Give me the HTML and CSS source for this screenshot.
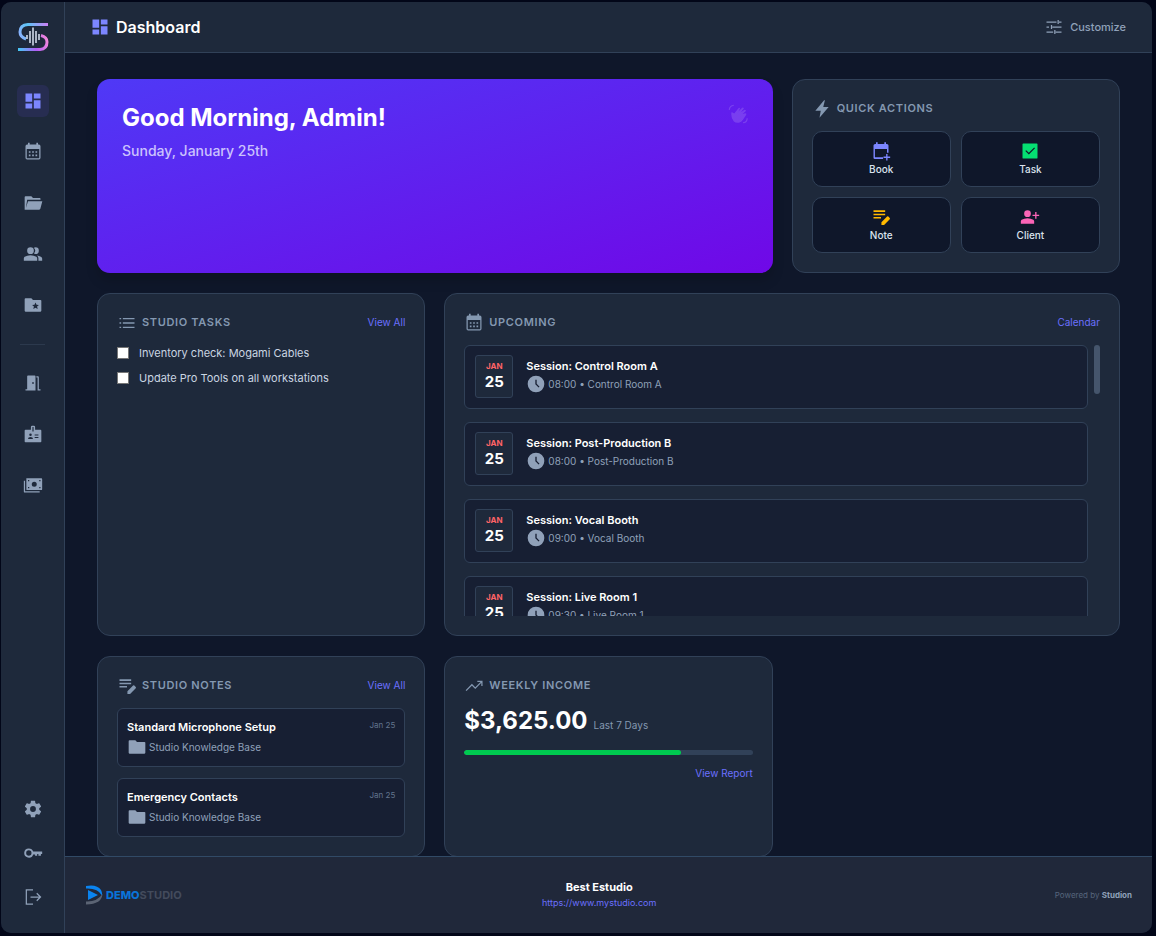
FILE: index.html
```
<!DOCTYPE html>
<html lang="en">

<head>
    <meta charset="UTF-8">
    <meta name="viewport" content="width=device-width, initial-scale=1.0">
    <title>Dashboard</title>
    <link rel="stylesheet" href="styles.css">
</head>

<body>
    <!-- Shared icons -->
    <svg class="sprite" aria-hidden="true">
        <symbol id="i-dashboard" viewBox="0 0 24 24"><path d="M13 3v6h8V3M13 21h8V11h-8M3 21h8v-6H3M3 13h8V3H3z"/></symbol>
        <symbol id="i-calendar" viewBox="0 0 24 24"><path fill-rule="evenodd" d="M6 1h2v2h8V1h2v2h1a2 2 0 0 1 2 2v14a2 2 0 0 1-2 2H5a2 2 0 0 1-2-2V5a2 2 0 0 1 2-2h1zM4.500 8.500v11h15v-11zM7 11h2v2H7zM11 11h2v2h-2zM15 11h2v2h-2zM7 15h2v2H7zM11 15h2v2h-2zM15 15h2v2h-2z"/></symbol>
        <symbol id="i-folder-open" viewBox="0 0 24 24"><path d="M2 20V5q0-1 1-1h7l2 2h8q1 0 1 1v1H5L3.500 18 6 10h17.200l-2.400 9q-.3 1-1.300 1z"/></symbol>
        <symbol id="i-people" viewBox="0 0 24 24"><path d="M1 20v-2.800q0-1.200 1-1.800Q5 13.500 9 13.500t7 1.900q1 .6 1 1.800V20zM18.500 20v-3q0-1.800-1.700-3.100 2.600.4 4.600 1.500 1.600.9 1.600 2.100V20z"/><circle cx="9" cy="8" r="4"/><path d="M13 11.500a5 5 0 0 0 0-7Q14 4 15 4a4 4 0 0 1 0 8q-1 0-2-.5z"/></symbol>
        <symbol id="i-folder-star" viewBox="0 0 24 24"><path fill-rule="evenodd" d="M2 5q0-1 1-1h7l2 2h9q1 0 1 1v12q0 1-1 1H3q-1 0-1-1zM17.600 16.700l-.7-2.900 2.200-1.900-2.900-.3L15 9l-1.200 2.600-2.900.3 2.200 1.900-.7 2.900 2.600-1.500z"/></symbol>
        <symbol id="i-door" viewBox="0 0 24 24"><path fill-rule="evenodd" d="M3 21v-1.500h2V4q0-1 1-1h8q1 0 1 1v17zM11 11v2h2v-2z"/><path d="M16 4h2q1 0 1 1v14.500h2V21h-3.500V5.500H16z"/></symbol>
        <symbol id="i-badge" viewBox="0 0 24 24"><path fill-rule="evenodd" d="M9.500 7V3.500Q9.500 2 11 2h2q1.500 0 1.500 1.500V7H21q1 0 1 1v13q0 1-1 1H3q-1 0-1-1V8q0-1 1-1zM11.300 3.500V9h1.400V3.500zM6 18h6q0-2.500-3-2.500T6 18zM9 11.500a1.500 1.500 0 1 0 0 3 1.500 1.500 0 0 0 0-3zM14 12.500v1.300h4.500v-1.300zM14 15.500v1.300h4.500v-1.300z"/></symbol>
        <symbol id="i-cash" viewBox="0 0 24 24"><path fill-rule="evenodd" d="M4 4h18q1 0 1 1v12q0 1-1 1H5q-1 0-1-1zM13.500 8a3 3 0 1 0 0 6 3 3 0 0 0 0-6zM6 6v1.500h1.500V6zM19.500 6v1.500H21V6zM6 14.500V16h1.500v-1.500zM19.500 14.500V16H21v-1.500z"/><path d="M1 7h1.500v12.500H20V21H2q-1 0-1-1z"/></symbol>
        <symbol id="i-cog" viewBox="0 0 24 24"><path d="M12 15.500A3.500 3.500 0 0 1 8.500 12 3.500 3.500 0 0 1 12 8.500a3.500 3.500 0 0 1 3.500 3.500 3.500 3.500 0 0 1-3.500 3.500m7.430-2.530c.04-.32.07-.64.07-.97s-.03-.66-.07-1l2.110-1.630c.19-.15.24-.42.12-.64l-2-3.460c-.12-.22-.39-.31-.61-.22l-2.490 1c-.52-.39-1.060-.73-1.690-.98l-.37-2.650A.5.500 0 0 0 14 2h-4c-.25 0-.46.18-.5.420l-.37 2.650c-.63.25-1.170.59-1.690.98l-2.490-1c-.22-.09-.49 0-.61.220l-2 3.460c-.13.220-.07.490.12.640L4.570 11c-.04.340-.07.670-.07 1s.03.650.07.970l-2.110 1.660c-.19.150-.25.420-.12.640l2 3.460c.12.220.39.300.61.220l2.490-1.010c.52.400 1.060.740 1.690.990l.37 2.650c.04.240.25.420.5.420h4c.25 0 .46-.18.500-.42l.37-2.650c.63-.26 1.170-.59 1.690-.99l2.490 1.010c.22.080.49 0 .61-.22l2-3.460c.12-.22.07-.49-.12-.64z"/></symbol>
        <symbol id="i-key" viewBox="0 0 24 24"><path fill-rule="evenodd" d="M7 6.500a5.500 5.500 0 0 1 5.200 3.800H23v3h-1.500v2h-3v-2H17v2h-2.500v-1.600h-2.300A5.500 5.500 0 1 1 7 6.500zm0 2.300a3.200 3.200 0 1 0 0 6.400 3.200 3.200 0 0 0 0-6.400z"/></symbol>
        <symbol id="i-logout" viewBox="0 0 24 24"><path class="line" d="M12 3.500H4v17h8M9 12h11.500M16.500 7.500L21 12l-4.500 4.500"/></symbol>
        <symbol id="i-tune" viewBox="0 0 24 24"><path class="line" d="M3 6h12M18 6h3M17 3.500v5M3 12h3M10 12h11M9 9.500v5M3 18h8M14 18h7M13 15.500v5"/></symbol>
        <symbol id="i-bolt" viewBox="0 0 24 24"><path d="M14.500 1.500L4 14h6.500L9 22.500 20 9.500h-6.500l2-8z"/></symbol>
        <symbol id="i-calendar-plus" viewBox="0 0 24 24"><path fill-rule="evenodd" d="M6 1.500h2v2h8v-2h2v2h1q2 0 2 2V14h-1.800V9.500H4.700v10h9.800V21.500H4.500q-1.500 0-1.500-1.500V5.500q0-2 2-2h1z"/><path d="M18.200 15.500h1.600v3.200H23v1.600h-3.200v3.200h-1.600v-3.200H15v-1.600h3.200z"/></symbol>
        <symbol id="i-task" viewBox="0 0 24 24"><path fill-rule="evenodd" d="M4 3h16q1 0 1 1v16q0 1-1 1H4q-1 0-1-1V4q0-1 1-1zM10.600 16.200L18 8.800l-1-1-6.400 6.400-3.200-3.200-1 1z"/></symbol>
        <symbol id="i-note" viewBox="0 0 24 24"><path d="M3 4h14v1.900H3zM3 8h14v1.900H3zM3 12h9v1.900H3zM12.500 21.500v-3.200l6.800-6.800q.8-.6 1.500 0l1.700 1.700q.6.700 0 1.500l-6.800 6.800z"/></symbol>
        <symbol id="i-client" viewBox="0 0 24 24"><circle cx="9" cy="8" r="4"/><path d="M1 20v-2.800q0-1.200 1-1.800Q5 13.500 9 13.500t7 1.900q1 .6 1 1.800V20zM18.200 6h1.600v3.200H23v1.600h-3.200V14h-1.600v-3.200H15V9.200h3.200z"/></symbol>
        <symbol id="i-list" viewBox="0 0 24 24"><path d="M3 6h2v1.600H3zM7 6h14v1.600H7zM3 11.200h2v1.600H3zM7 11.200h14v1.600H7zM3 16.400h2V18H3zM7 16.400h14V18H7z"/></symbol>
        <symbol id="i-clock" viewBox="0 0 24 24"><path fill-rule="evenodd" d="M12 2a10 10 0 1 0 0 20 10 10 0 0 0 0-20zM11.200 7h1.600v4.700l3.400 3.500-1.100 1.100-3.900-3.900z"/></symbol>
        <symbol id="i-folder" viewBox="0 0 24 24"><path d="M2 5q0-1 1-1h7l2 2h9q1 0 1 1v12q0 1-1 1H3q-1 0-1-1z"/></symbol>
        <symbol id="i-trend" viewBox="0 0 24 24"><path class="line" d="M2.500 17.500l7-7 4 4 8-8M16 6.500h5.500V12"/></symbol>
        <symbol id="i-wave" viewBox="0 0 24 24"><path d="M4.500 9.500l3 2L12.500 5q1.200-1 2 .3L12.500 9l4.500-4.500q1.500-.7 2 .8L15.500 10l4.500-3q1.500 0 1.500 1.500L17.500 12l3.500-1q1.300.3 1 1.700l-4 6.300a7.500 7.500 0 0 1-11 2Q3.500 17.500 4 11z"/><path class="line" d="M1.500 7Q2 2 7 1.500M23 17q0 5-5 5.500"/></symbol>
    </svg>

    <div class="app">
        <aside class="sidebar">
            <a class="brand" href="#" aria-label="Studion">
                <svg width="32" height="32" viewBox="0 0 32 32" fill="none">
                    <defs>
                        <linearGradient id="gTop" x1="2" y1="16" x2="31" y2="2" gradientUnits="userSpaceOnUse">
                            <stop offset="0" stop-color="#8fb0ff"/>
                            <stop offset=".4" stop-color="#5cc4f5"/>
                            <stop offset="1" stop-color="#cf7df5"/>
                        </linearGradient>
                        <linearGradient id="gBottom" x1="1" y1="28" x2="31" y2="18" gradientUnits="userSpaceOnUse">
                            <stop offset="0" stop-color="#45c8f5"/>
                            <stop offset=".55" stop-color="#b25cf5"/>
                            <stop offset="1" stop-color="#f58adb"/>
                        </linearGradient>
                    </defs>
                    <path d="M31 3.500H11Q3 4 3 11q0 5 6 7" stroke="url(#gTop)" stroke-width="3"/>
                    <path d="M1 28.500h22q7-.5 7-7.500 0-5-6-6.500" stroke="url(#gBottom)" stroke-width="3"/>
                    <path d="M10 14v4M13 10v12M16 6.500v18M19 10v12M22 13v6" stroke="#dbe4f5" stroke-width="1.500"/>
                </svg>
            </a>
            <nav class="nav">
                <a class="nav-link active" href="#" aria-label="Dashboard"><svg class="icon"><use href="#i-dashboard"/></svg></a>
                <a class="nav-link" href="#" aria-label="Calendar"><svg class="icon"><use href="#i-calendar"/></svg></a>
                <a class="nav-link" href="#" aria-label="Projects"><svg class="icon"><use href="#i-folder-open"/></svg></a>
                <a class="nav-link" href="#" aria-label="Clients"><svg class="icon"><use href="#i-people"/></svg></a>
                <a class="nav-link" href="#" aria-label="Library"><svg class="icon"><use href="#i-folder-star"/></svg></a>
                <hr>
                <a class="nav-link" href="#" aria-label="Rooms"><svg class="icon"><use href="#i-door"/></svg></a>
                <a class="nav-link" href="#" aria-label="Staff"><svg class="icon"><use href="#i-badge"/></svg></a>
                <a class="nav-link" href="#" aria-label="Payments"><svg class="icon"><use href="#i-cash"/></svg></a>
            </nav>
            <div class="nav-bottom">
                <a class="nav-link" href="#" aria-label="Settings"><svg class="icon"><use href="#i-cog"/></svg></a>
                <a class="nav-link" href="#" aria-label="Password"><svg class="icon"><use href="#i-key"/></svg></a>
                <a class="nav-link" href="#" aria-label="Log out"><svg class="icon"><use href="#i-logout"/></svg></a>
            </div>
        </aside>

        <div class="page">
            <header class="topbar">
                <h1><svg class="icon"><use href="#i-dashboard"/></svg>Dashboard</h1>
                <button class="customize" type="button"><svg class="icon"><use href="#i-tune"/></svg>Customize</button>
            </header>

            <main class="content">
                <section class="hero wide">
                    <div>
                        <h2>Good Morning, Admin!</h2>
                        <p>Sunday, January 25th</p>
                    </div>
                    <svg class="icon"><use href="#i-wave"/></svg>
                </section>

                <section class="card">
                    <div class="card-head">
                        <h3><svg class="icon"><use href="#i-bolt"/></svg>Quick Actions</h3>
                    </div>
                    <div class="actions">
                        <button type="button"><svg class="icon indigo"><use href="#i-calendar-plus"/></svg>Book</button>
                        <button type="button"><svg class="icon green"><use href="#i-task"/></svg>Task</button>
                        <button type="button"><svg class="icon amber"><use href="#i-note"/></svg>Note</button>
                        <button type="button"><svg class="icon pink"><use href="#i-client"/></svg>Client</button>
                    </div>
                </section>

                <section class="card">
                    <div class="card-head">
                        <h3><svg class="icon"><use href="#i-list"/></svg>Studio Tasks</h3>
                        <a href="#">View All</a>
                    </div>
                    <div class="tasks">
                        <label><input type="checkbox">Inventory check: Mogami Cables</label>
                        <label><input type="checkbox">Update Pro Tools on all workstations</label>
                    </div>
                </section>

                <section class="card wide">
                    <div class="card-head">
                        <h3><svg class="icon"><use href="#i-calendar"/></svg>Upcoming</h3>
                        <a href="#">Calendar</a>
                    </div>
                    <div class="scroller">
                        <div class="sessions">
                            <article class="session">
                                <div class="date"><span>Jan</span><b>25</b></div>
                                <div>
                                    <h4>Session: Control Room A</h4>
                                    <p class="meta"><svg class="icon"><use href="#i-clock"/></svg>08:00 • Control Room A</p>
                                </div>
                            </article>
                            <article class="session">
                                <div class="date"><span>Jan</span><b>25</b></div>
                                <div>
                                    <h4>Session: Post-Production B</h4>
                                    <p class="meta"><svg class="icon"><use href="#i-clock"/></svg>08:00 • Post-Production B</p>
                                </div>
                            </article>
                            <article class="session">
                                <div class="date"><span>Jan</span><b>25</b></div>
                                <div>
                                    <h4>Session: Vocal Booth</h4>
                                    <p class="meta"><svg class="icon"><use href="#i-clock"/></svg>09:00 • Vocal Booth</p>
                                </div>
                            </article>
                            <article class="session">
                                <div class="date"><span>Jan</span><b>25</b></div>
                                <div>
                                    <h4>Session: Live Room 1</h4>
                                    <p class="meta"><svg class="icon"><use href="#i-clock"/></svg>09:30 • Live Room 1</p>
                                </div>
                            </article>
                        </div>
                        <div class="scrollbar"></div>
                    </div>
                </section>

                <section class="card">
                    <div class="card-head">
                        <h3><svg class="icon"><use href="#i-note"/></svg>Studio Notes</h3>
                        <a href="#">View All</a>
                    </div>
                    <div class="notes">
                        <article class="note">
                            <div class="note-top">
                                <h4>Standard Microphone Setup</h4>
                                <time>Jan 25</time>
                            </div>
                            <p class="meta"><svg class="icon"><use href="#i-folder"/></svg>Studio Knowledge Base</p>
                        </article>
                        <article class="note">
                            <div class="note-top">
                                <h4>Emergency Contacts</h4>
                                <time>Jan 25</time>
                            </div>
                            <p class="meta"><svg class="icon"><use href="#i-folder"/></svg>Studio Knowledge Base</p>
                        </article>
                    </div>
                </section>

                <section class="card">
                    <div class="card-head">
                        <h3><svg class="icon"><use href="#i-trend"/></svg>Weekly Income</h3>
                    </div>
                    <p class="income"><b>$3,625.00</b> <span>Last 7 Days</span></p>
                    <div class="bar"><div class="bar-fill" style="width: 75%"></div></div>
                    <a class="report" href="#">View Report</a>
                </section>
            </main>

            <footer class="footer">
                <div class="logo">
                    <svg width="18" height="20" viewBox="0 0 18 20">
                        <path d="M1 1Q12-1 16 5q1.500 3 1 5.500Q13 3 1 3.500z" fill="#0a84f0"/>
                        <path d="M3 5l10 5-10 5z" fill="#0a84f0"/>
                        <path d="M17.500 9Q17 19 1 19.500v-3Q12 17 17.500 9z" fill="#5b6474"/>
                    </svg>
                    <span><b>DEMO</b>STUDIO</span>
                </div>
                <div class="studio">
                    <strong>Best Estudio</strong>
                    <a href="#">https://www.mystudio.com</a>
                </div>
                <p class="powered">Powered by <b>Studion</b></p>
            </footer>
        </div>
    </div>
</body>

</html>
```
FILE: styles.css
```
* {
    box-sizing: border-box;
    margin: 0;
    padding: 0;
}

body {
    height: 100vh;
    padding: 2px 4px 3px 1px;
    background: #020618;
    color: #fff;
    font-family: Inter, sans-serif;
    font-size: 11px;
    line-height: 16px;
}

a {
    color: #6b70ff;
    text-decoration: none;
}

button {
    font: inherit;
    cursor: pointer;
}

.sprite {
    display: none;
}

.icon {
    width: 20px;
    height: 20px;
    flex-shrink: 0;
    fill: currentColor;
}

.line {
    fill: none;
    stroke: currentColor;
    stroke-width: 1.5;
}

.app {
    display: flex;
    height: 100%;
    border-radius: 10px;
    overflow: hidden;
    background: #0f172a;
}

/* Sidebar */

.sidebar {
    display: flex;
    flex-direction: column;
    align-items: center;
    width: 64px;
    flex-shrink: 0;
    padding: 19px 0 20px;
    background: #1e293b;
    border-right: 1px solid #314158;
}

.brand {
    height: 32px;
    margin-bottom: 32px;
}

.nav,
.nav-bottom {
    display: flex;
    flex-direction: column;
    align-items: center;
    gap: 19px;
}

.nav-bottom {
    gap: 12px;
    margin-top: auto;
}

.nav hr {
    width: 25px;
    margin: 4px 0 3px;
    border: 0;
    border-top: 1px solid #2c394d;
}

.nav-link {
    display: grid;
    place-items: center;
    width: 32px;
    height: 32px;
    border-radius: 6px;
    color: #90a1b9;
}

.nav-link.active {
    background: #272d51;
    color: #7c86ff;
}

/* Top bar */

.page {
    display: flex;
    flex-direction: column;
    flex: 1;
    min-width: 0;
}

.topbar {
    display: flex;
    align-items: center;
    justify-content: space-between;
    height: 51px;
    flex-shrink: 0;
    padding: 0 26px 0 25px;
    background: #1e293b;
    border-bottom: 1px solid #314158;
}

.topbar h1 {
    display: flex;
    align-items: center;
    gap: 6px;
    font-size: 16px;
    font-weight: 600;
}

.topbar h1 .icon {
    color: #7c86ff;
}

.customize {
    display: flex;
    align-items: center;
    gap: 6px;
    border: 0;
    background: none;
    color: #90a1b9;
    font-weight: 500;
}

/* Widgets */

.content {
    display: grid;
    grid-template-columns: repeat(3, 1fr);
    align-content: start;
    gap: 20px 19px;
    flex: 1;
    min-height: 0;
    padding: 26px 32px;
    overflow-y: auto;
    scrollbar-width: none;
}

.wide {
    grid-column: span 2;
}

.hero {
    display: flex;
    justify-content: space-between;
    padding: 25px;
    border-radius: 13px;
    background: linear-gradient(to bottom right, #4f39f6, #7008e7);
    box-shadow: 0 8px 12px rgba(0, 0, 0, 0.15);
}

.hero h2 {
    font-size: 24px;
    line-height: 28px;
}

.hero p {
    margin-top: 9px;
    color: #cbc2fd;
    font-size: 14px;
    font-weight: 500;
    line-height: 20px;
}

.hero .icon {
    color: rgba(255, 255, 255, 0.15);
}

.card {
    padding: 19px;
    background: #1e293b;
    border: 1px solid #314158;
    border-radius: 13px;
}

.card-head {
    display: flex;
    justify-content: space-between;
    height: 20px;
    margin-bottom: 12px;
    line-height: 18px;
}

.card-head h3 {
    display: flex;
    gap: 5px;
    color: #8498b1;
    font-size: 11px;
    font-weight: 600;
    letter-spacing: 0.06em;
    text-transform: uppercase;
}

.card-head a,
.report {
    font-size: 10px;
}

h4 {
    font-size: 11px;
    font-weight: 600;
}

.actions {
    display: grid;
    grid-template-columns: 1fr 1fr;
    gap: 10px;
}

.actions button {
    display: flex;
    flex-direction: column;
    align-items: center;
    justify-content: center;
    height: 56px;
    background: #0f172a;
    border: 1px solid #314158;
    border-radius: 10px;
    color: #dbe3ee;
    font-size: 10px;
    font-weight: 500;
}

.actions .indigo {
    color: #7c86ff;
}

.actions .green {
    color: #05df72;
}

.actions .amber {
    color: #ffb900;
}

.actions .pink {
    color: #fb64b6;
}

.tasks {
    display: flex;
    flex-direction: column;
    gap: 9px;
}

.tasks label {
    display: flex;
    align-items: center;
    gap: 10px;
    color: #cad5e2;
}

.tasks input {
    appearance: none;
    width: 12px;
    height: 12px;
    background: #fff;
    border: 1px solid #767676;
}

.tasks input:checked {
    background: #7c86ff;
}

.scroller {
    display: flex;
    gap: 6px;
    height: 271px;
}

.sessions {
    display: flex;
    flex-direction: column;
    gap: 13px;
    flex: 1;
    overflow: hidden;
}

.scrollbar {
    width: 6px;
    height: 49px;
    border-radius: 3px;
    background: #45556c;
}

.session {
    display: flex;
    gap: 13px;
    height: 64px;
    flex-shrink: 0;
    padding: 9px 10px;
    background: #171f33;
    border: 1px solid #314158;
    border-radius: 6px;
}

.date {
    display: flex;
    flex-direction: column;
    align-items: center;
    width: 38px;
    height: 43px;
    padding-top: 4px;
    background: #1e293b;
    border: 1px solid #314158;
    border-radius: 3px;
}

.date span {
    color: #ff6467;
    font-size: 8px;
    font-weight: 700;
    line-height: 12px;
    text-transform: uppercase;
}

.date b {
    font-size: 15px;
    line-height: 20px;
}

.session h4 {
    margin-top: 4px;
    line-height: 15px;
}

.meta {
    display: flex;
    align-items: center;
    gap: 2px;
    color: #90a1b9;
    font-size: 10px;
}

.notes {
    display: flex;
    flex-direction: column;
    gap: 11px;
}

.note {
    padding: 9px 9px 8px;
    background: #171f33;
    border: 1px solid #314158;
    border-radius: 6px;
}

.note-top {
    display: flex;
    justify-content: space-between;
    height: 18px;
    line-height: 18px;
}

.note time {
    color: #62748e;
    font-size: 8px;
    line-height: 14px;
}

.note .meta {
    height: 22px;
}

.income {
    display: flex;
    align-items: baseline;
    gap: 6px;
    margin-bottom: 12px;
    line-height: 26px;
}

.income b {
    font-size: 24px;
}

.income span {
    color: #8498b1;
    font-size: 10px;
}

.bar {
    height: 5px;
    margin-bottom: 10px;
    border-radius: 3px;
    background: #314158;
    overflow: hidden;
}

.bar-fill {
    height: 100%;
    border-radius: 3px;
    background: #00c950;
}

.report {
    display: block;
    text-align: right;
}

/* Footer */

.footer {
    display: grid;
    grid-template-columns: 49fr auto 51fr;
    align-items: center;
    height: 77px;
    flex-shrink: 0;
    padding: 0 20px;
    background: #20283a;
    border-top: 1px solid #314a66;
}

.logo {
    display: flex;
    align-items: center;
    gap: 3px;
    color: #434b5c;
    font-weight: 700;
}

.logo b {
    color: #0a74d8;
    font-weight: 800;
}

.studio {
    display: flex;
    flex-direction: column;
    align-items: center;
}

.studio a {
    font-size: 9px;
}

.powered {
    color: #56657c;
    font-size: 8px;
    text-align: right;
}

.powered b {
    color: #90a1b9;
}
```
